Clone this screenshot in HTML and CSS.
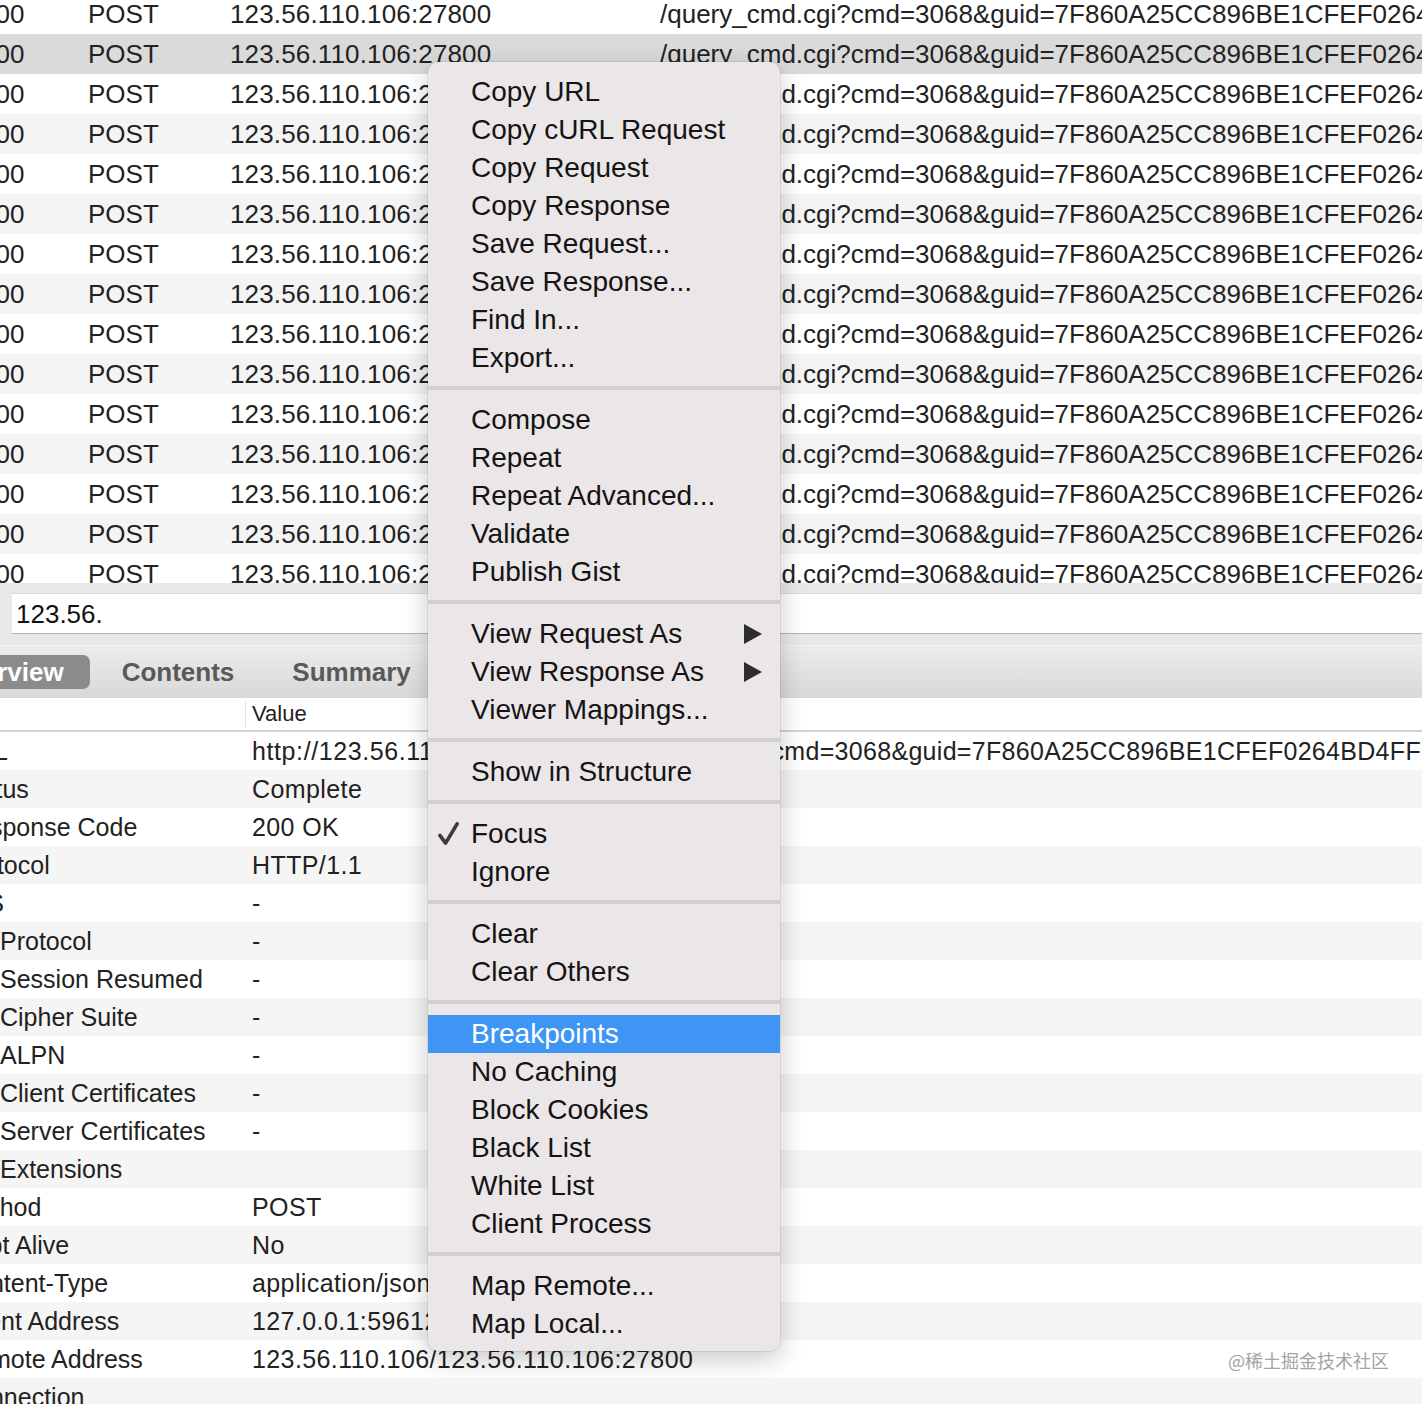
FILE: index.html
```html
<!DOCTYPE html>
<html>
<head>
<meta charset="utf-8">
<link rel="stylesheet" href="styles.css">
</head>
<body>
<div class="app">
  <div class="list">
    <div class="list-inner">
      <div class="row"><span class="c-status">200</span><span class="c-method">POST</span><span class="c-host">123.56.110.106:27800</span><span class="c-path">/query_cmd.cgi?cmd=3068&amp;guid=7F860A25CC896BE1CFEF0264BD4FF</span></div>
      <div class="row sel"><span class="c-status">200</span><span class="c-method">POST</span><span class="c-host">123.56.110.106:27800</span><span class="c-path">/query_cmd.cgi?cmd=3068&amp;guid=7F860A25CC896BE1CFEF0264BD4FF</span></div>
      <div class="row"><span class="c-status">200</span><span class="c-method">POST</span><span class="c-host">123.56.110.106:27800</span><span class="c-path">/query_cmd.cgi?cmd=3068&amp;guid=7F860A25CC896BE1CFEF0264BD4FF</span></div>
      <div class="row"><span class="c-status">200</span><span class="c-method">POST</span><span class="c-host">123.56.110.106:27800</span><span class="c-path">/query_cmd.cgi?cmd=3068&amp;guid=7F860A25CC896BE1CFEF0264BD4FF</span></div>
      <div class="row"><span class="c-status">200</span><span class="c-method">POST</span><span class="c-host">123.56.110.106:27800</span><span class="c-path">/query_cmd.cgi?cmd=3068&amp;guid=7F860A25CC896BE1CFEF0264BD4FF</span></div>
      <div class="row"><span class="c-status">200</span><span class="c-method">POST</span><span class="c-host">123.56.110.106:27800</span><span class="c-path">/query_cmd.cgi?cmd=3068&amp;guid=7F860A25CC896BE1CFEF0264BD4FF</span></div>
      <div class="row"><span class="c-status">200</span><span class="c-method">POST</span><span class="c-host">123.56.110.106:27800</span><span class="c-path">/query_cmd.cgi?cmd=3068&amp;guid=7F860A25CC896BE1CFEF0264BD4FF</span></div>
      <div class="row"><span class="c-status">200</span><span class="c-method">POST</span><span class="c-host">123.56.110.106:27800</span><span class="c-path">/query_cmd.cgi?cmd=3068&amp;guid=7F860A25CC896BE1CFEF0264BD4FF</span></div>
      <div class="row"><span class="c-status">200</span><span class="c-method">POST</span><span class="c-host">123.56.110.106:27800</span><span class="c-path">/query_cmd.cgi?cmd=3068&amp;guid=7F860A25CC896BE1CFEF0264BD4FF</span></div>
      <div class="row"><span class="c-status">200</span><span class="c-method">POST</span><span class="c-host">123.56.110.106:27800</span><span class="c-path">/query_cmd.cgi?cmd=3068&amp;guid=7F860A25CC896BE1CFEF0264BD4FF</span></div>
      <div class="row"><span class="c-status">200</span><span class="c-method">POST</span><span class="c-host">123.56.110.106:27800</span><span class="c-path">/query_cmd.cgi?cmd=3068&amp;guid=7F860A25CC896BE1CFEF0264BD4FF</span></div>
      <div class="row"><span class="c-status">200</span><span class="c-method">POST</span><span class="c-host">123.56.110.106:27800</span><span class="c-path">/query_cmd.cgi?cmd=3068&amp;guid=7F860A25CC896BE1CFEF0264BD4FF</span></div>
      <div class="row"><span class="c-status">200</span><span class="c-method">POST</span><span class="c-host">123.56.110.106:27800</span><span class="c-path">/query_cmd.cgi?cmd=3068&amp;guid=7F860A25CC896BE1CFEF0264BD4FF</span></div>
      <div class="row"><span class="c-status">200</span><span class="c-method">POST</span><span class="c-host">123.56.110.106:27800</span><span class="c-path">/query_cmd.cgi?cmd=3068&amp;guid=7F860A25CC896BE1CFEF0264BD4FF</span></div>
      <div class="row"><span class="c-status">200</span><span class="c-method">POST</span><span class="c-host">123.56.110.106:27800</span><span class="c-path">/query_cmd.cgi?cmd=3068&amp;guid=7F860A25CC896BE1CFEF0264BD4FF</span></div>
    </div>
  </div>

  <div class="filter"><div class="field">123.56.</div></div>

  <div class="tabs">
    <span class="tab active">Overview</span>
    <span class="tab">Contents</span>
    <span class="tab">Summary</span>
    <span class="tab">Chart</span>
  </div>

  <div class="dhead"><span class="k">Name</span><span class="v">Value</span></div>
  <div class="drows">
    <div class="drow"><span class="k">URL</span><span class="v url"><span class="url-head">http://123.56.110.106:27800/query_cmd.cgi?</span>cmd=3068&amp;guid=7F860A25CC896BE1CFEF0264BD4FF</span></div>
    <div class="drow"><span class="k">Status</span><span class="v">Complete</span></div>
    <div class="drow"><span class="k">Response Code</span><span class="v">200 OK</span></div>
    <div class="drow"><span class="k">Protocol</span><span class="v">HTTP/1.1</span></div>
    <div class="drow"><span class="k">TLS</span><span class="v">-</span></div>
    <div class="drow"><span class="k sub">Protocol</span><span class="v">-</span></div>
    <div class="drow"><span class="k sub">Session Resumed</span><span class="v">-</span></div>
    <div class="drow"><span class="k sub">Cipher Suite</span><span class="v">-</span></div>
    <div class="drow"><span class="k sub">ALPN</span><span class="v">-</span></div>
    <div class="drow"><span class="k sub">Client Certificates</span><span class="v">-</span></div>
    <div class="drow"><span class="k sub">Server Certificates</span><span class="v">-</span></div>
    <div class="drow"><span class="k sub">Extensions</span><span class="v"></span></div>
    <div class="drow"><span class="k">Method</span><span class="v">POST</span></div>
    <div class="drow"><span class="k">Kept Alive</span><span class="v">No</span></div>
    <div class="drow"><span class="k">Content-Type</span><span class="v">application/json</span></div>
    <div class="drow"><span class="k">Client Address</span><span class="v">127.0.0.1:59612</span></div>
    <div class="drow"><span class="k">Remote Address</span><span class="v">123.56.110.106/123.56.110.106:27800</span></div>
    <div class="drow"><span class="k">Connection</span><span class="v"></span></div>
  </div>

  <div class="menu">
    <div class="item">Copy URL</div>
    <div class="item">Copy cURL Request</div>
    <div class="item">Copy Request</div>
    <div class="item">Copy Response</div>
    <div class="item">Save Request...</div>
    <div class="item">Save Response...</div>
    <div class="item">Find In...</div>
    <div class="item">Export...</div>
    <div class="sep"></div>
    <div class="item">Compose</div>
    <div class="item">Repeat</div>
    <div class="item">Repeat Advanced...</div>
    <div class="item">Validate</div>
    <div class="item">Publish Gist</div>
    <div class="sep"></div>
    <div class="item">View Request As<svg class="arrow" viewBox="0 0 18 20"><polygon points="0,0 18,10 0,20"/></svg></div>
    <div class="item">View Response As<svg class="arrow" viewBox="0 0 18 20"><polygon points="0,0 18,10 0,20"/></svg></div>
    <div class="item">Viewer Mappings...</div>
    <div class="sep"></div>
    <div class="item">Show in Structure</div>
    <div class="sep"></div>
    <div class="item checked"><svg class="check" viewBox="0 0 24 26"><path d="M3 15 L9 23 L21 3"/></svg>Focus</div>
    <div class="item">Ignore</div>
    <div class="sep"></div>
    <div class="item">Clear</div>
    <div class="item">Clear Others</div>
    <div class="sep"></div>
    <div class="item hl">Breakpoints</div>
    <div class="item">No Caching</div>
    <div class="item">Block Cookies</div>
    <div class="item">Black List</div>
    <div class="item">White List</div>
    <div class="item">Client Process</div>
    <div class="sep"></div>
    <div class="item">Map Remote...</div>
    <div class="item">Map Local...</div>
  </div>

  <div class="watermark">@稀土掘金技术社区</div>
</div>
</body>
</html>
```

FILE: styles.css
```css
html, body {
  margin: 0;
  padding: 0;
  background: #fff;
}

body {
  width: 1422px;
  height: 1404px;
  overflow: hidden;
  font-family: "Liberation Sans", Arial, "Noto Sans CJK SC", sans-serif;
  color: #222;
}

.app {
  position: relative;
  width: 1422px;
  height: 1404px;
  overflow: hidden;
  background: #fff;
}

/* ---------- request list ---------- */
.list {
  height: 583px;
  overflow: hidden;
}

.list-inner {
  margin-top: -6px;
}

.row {
  display: grid;
  grid-template-columns: 107px 142px 430px minmax(0, 1fr);
  margin-left: -19px;
  height: 40px;
  line-height: 40px;
  font-size: 26px;
  white-space: nowrap;
  color: #222;
}

.row:nth-child(even) {
  background: #f4f4f4;
}

.row.sel {
  background: #dadada;
}

.row > span {
  overflow: hidden;
}

.c-host {
  letter-spacing: 0.15px;
}

.c-path {
  letter-spacing: 0;
}

/* ---------- filter ---------- */
.filter {
  height: 62px;
  box-sizing: border-box;
  padding: 10px 0 0 12px;
  background: #e8e8e8;
}

.field {
  height: 41px;
  box-sizing: border-box;
  background: #fff;
  border-top: 1px solid #d9d9d9;
  border-bottom: 1px solid #b4b4b4;
  padding-left: 4px;
  font-size: 26px;
  line-height: 40px;
  color: #111;
}

/* ---------- tabs ---------- */
.tabs {
  height: 53px;
  box-sizing: border-box;
  border-top: 1px solid #f3f3f3;
  background: linear-gradient(#ececec, #d8d8d8);
  display: flex;
  align-items: center;
  gap: 6px;
  margin-left: -78px;
  white-space: nowrap;
}

.tab {
  height: 34px;
  line-height: 34px;
  padding: 0 26px;
  border-radius: 7px;
  font-size: 26px;
  font-weight: bold;
  color: #595959;
}

.tab.active {
  background: #8b8b8b;
  color: #fff;
}

/* ---------- detail table ---------- */
.dhead {
  display: grid;
  grid-template-columns: 287px minmax(0, 1fr);
  margin-left: -42px;
  height: 34px;
  box-sizing: border-box;
  border-bottom: 2px solid #d2d2d2;
  align-items: center;
  font-size: 22px;
  color: #222;
}

.dhead .k {
  visibility: hidden;
}

.dhead .v {
  height: 26px;
  line-height: 26px;
  border-left: 1px solid #e2e2e2;
  padding-left: 6px;
}

.drow {
  display: grid;
  grid-template-columns: 287px minmax(0, 1fr);
  margin-left: -42px;
  height: 38px;
  line-height: 38px;
  font-size: 25px;
  white-space: nowrap;
  color: #222;
}

.drow:nth-child(even) {
  background: #f5f5f5;
}

.drow .k {
  overflow: hidden;
}

.drow .k.sub {
  padding-left: 42px;
}

.drow .v {
  padding-left: 7px;
  overflow: hidden;
  letter-spacing: 0.4px;
}

.drow .v.url {
  letter-spacing: 0.3px;
}

.url-head {
  letter-spacing: 0.6px;
}

/* ---------- context menu ---------- */
.menu {
  position: absolute;
  left: 428px;
  top: 62px;
  width: 352px;
  box-sizing: border-box;
  padding: 11px 0 8px;
  background: #ebe6e7;
  border-radius: 10px;
  box-shadow: 0 0 0 1px rgba(0, 0, 0, 0.07), 0 8px 26px rgba(0, 0, 0, 0.22);
}

.item {
  position: relative;
  display: flex;
  align-items: center;
  justify-content: space-between;
  height: 38px;
  padding: 0 18px 0 43px;
  font-size: 28px;
  color: #141414;
  white-space: nowrap;
}

.item.hl {
  background: #3f95f3;
  color: #fff;
}

.arrow {
  width: 18px;
  height: 20px;
  fill: #2d2d2d;
}

.check {
  position: absolute;
  left: 9px;
  top: 6px;
  width: 23px;
  height: 25px;
  fill: none;
  stroke: #3b3b3b;
  stroke-width: 3.8;
  stroke-linecap: round;
  stroke-linejoin: round;
}

.sep {
  height: 4px;
  margin: 9px 0 11px;
  background: #d5d0d1;
}

/* ---------- watermark ---------- */
.watermark {
  position: absolute;
  left: 1228px;
  top: 1346px;
  font-family: "Noto Sans CJK SC", sans-serif;
  font-size: 18px;
  line-height: 28px;
  color: #a3a3a3;
  white-space: nowrap;
}
```
